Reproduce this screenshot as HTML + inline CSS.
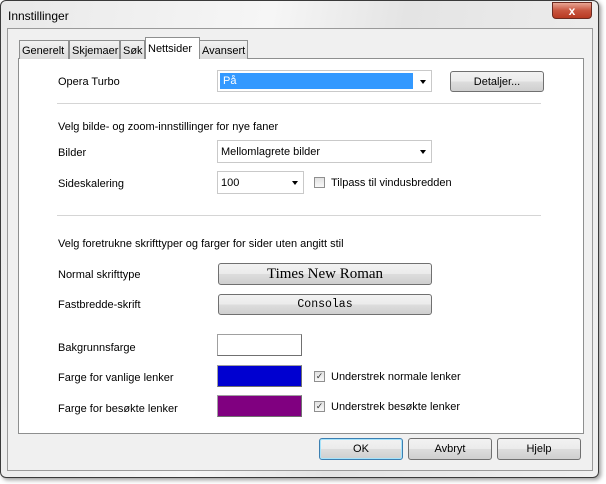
<!DOCTYPE html><html><head><style>
body{margin:0;width:606px;height:484px;background:#fff;font-family:"Liberation Sans",sans-serif;font-size:11px;color:#000;position:relative;overflow:hidden}
.a{position:absolute}
.btn{position:absolute;border:1px solid #707070;border-radius:3px;background:linear-gradient(#f2f2f2,#ebebeb 50%,#dddddd 51%,#cfcfcf);text-align:center;box-sizing:border-box}
.combo{position:absolute;border:1px solid #c9c9c9;background:#fff;box-sizing:border-box;padding-left:3px}
.combo:after{content:"";position:absolute;right:5px;top:9px;border-left:3.5px solid transparent;border-right:3.5px solid transparent;border-top:4px solid #000}
.chk{position:absolute;width:11px;height:11px;border:1px solid #8f8f8f;background:linear-gradient(#e2e2e2,#f8f8f8);box-sizing:border-box}
.tab{position:absolute;top:40px;height:19px;border:1px solid #8e8f8f;border-bottom:none;background:linear-gradient(#f2f2f2,#dbdbdb);box-sizing:border-box;padding:4px 2px 0;font-size:11px}
.sw{position:absolute;width:85px;height:22px;border:1px solid #a0a0a0;border-right-color:#707070;border-bottom-color:#707070;box-sizing:border-box}
</style></head><body>
<div class="a" style="left:0;top:0;width:599px;height:478px;border:1px solid #3a3a3a;border-radius:6px;background:linear-gradient(100deg,#e9e9e9 0%,#f6f6f6 40%,#e4e4e4 60%,#f0f0f0 100%);box-sizing:border-box;box-shadow:2px 2px 4px rgba(0,0,0,.4)"></div>
<div class="a" style="left:8px;top:9px;font-size:12px">Innstillinger</div>
<div class="a" style="left:552px;top:2px;width:40px;height:17px;border:1px solid #6b2a20;border-radius:0 0 4px 4px;background:linear-gradient(#e8a593,#c8553f 50%,#b83a22);color:#fff;font-weight:bold;text-align:center;font-size:12px;line-height:16px;box-sizing:border-box">x</div>
<div class="a" style="left:7px;top:28px;width:586px;height:443px;background:#f0f0f0;border:1px solid #9a9a9a;box-sizing:border-box"></div>
<div class="a" style="left:18px;top:58px;width:566px;height:376px;background:#fff;border:1px solid #8e8f8f;box-sizing:border-box"></div>
<div class="tab" style="left:19px;width:50px">Generelt</div>
<div class="tab" style="left:69px;width:51px">Skjemaer</div>
<div class="tab" style="left:120px;width:25px">Søk</div>
<div class="tab" style="left:199px;width:49px">Avansert</div>
<div class="tab" style="left:145px;top:37px;height:22px;width:55px;background:#fff;padding-top:5px">Nettsider</div>

<div class="a" style="left:58px;top:76px">Opera Turbo</div>
<div class="combo" style="left:217px;top:70px;width:215px;height:22px;padding:0"><div style="position:absolute;left:2px;top:2px;width:193px;height:16px;background:#3399ff;color:#fff;padding-left:3px;line-height:17px;box-sizing:border-box">På</div></div>
<div class="btn" style="left:450px;top:71px;width:94px;height:21px;line-height:20px">Detaljer...</div>
<div class="a" style="left:57px;top:103px;width:484px;height:1px;background:#d5d5d5"></div>
<div class="a" style="left:58px;top:121px">Velg bilde- og zoom-innstillinger for nye faner</div>
<div class="a" style="left:58px;top:147px">Bilder</div>
<div class="combo" style="left:217px;top:140px;width:215px;height:23px;line-height:23px">Mellomlagrete bilder</div>
<div class="a" style="left:58px;top:178px">Sideskalering</div>
<div class="combo" style="left:217px;top:171px;width:87px;height:23px;line-height:23px">100</div>
<div class="chk" style="left:314px;top:177px"></div>
<div class="a" style="left:331px;top:177px">Tilpass til vindusbredden</div>
<div class="a" style="left:57px;top:215px;width:484px;height:1px;background:#d5d5d5"></div>
<div class="a" style="left:58px;top:238px">Velg foretrukne skrifttyper og farger for sider uten angitt stil</div>
<div class="a" style="left:58px;top:269px">Normal skrifttype</div>
<div class="btn" style="left:218px;top:263px;width:214px;height:22px;line-height:21px;font-family:'Liberation Serif',serif;font-size:15px">Times New Roman</div>
<div class="a" style="left:58px;top:299px">Fastbredde-skrift</div>
<div class="btn" style="left:218px;top:294px;width:214px;height:21px;line-height:20px;font-family:'Liberation Mono',monospace;font-size:11.5px">Consolas</div>
<div class="a" style="left:58px;top:342px">Bakgrunnsfarge</div>
<div class="sw" style="left:217px;top:334px;background:#fff"></div>
<div class="a" style="left:58px;top:372px">Farge for vanlige lenker</div>
<div class="sw" style="left:217px;top:365px;background:#0000d0"></div>
<div class="chk" style="left:314px;top:371px;font-size:9px;line-height:9px;text-align:center;color:#333">✓</div>
<div class="a" style="left:331px;top:371px">Understrek normale lenker</div>
<div class="a" style="left:58px;top:403px">Farge for besøkte lenker</div>
<div class="sw" style="left:217px;top:395px;background:#800080"></div>
<div class="chk" style="left:314px;top:401px;font-size:9px;line-height:9px;text-align:center;color:#333">✓</div>
<div class="a" style="left:331px;top:401px">Understrek besøkte lenker</div>

<div class="btn" style="left:319px;top:438px;width:84px;height:22px;line-height:21px;border-color:#3c7fb1;box-shadow:inset 0 0 0 1px #a6e3fb">OK</div>
<div class="btn" style="left:408px;top:438px;width:84px;height:22px;line-height:21px">Avbryt</div>
<div class="btn" style="left:497px;top:438px;width:84px;height:22px;line-height:21px">Hjelp</div>
</body></html>
